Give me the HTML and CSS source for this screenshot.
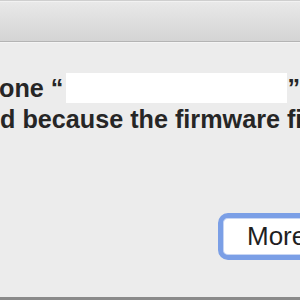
FILE: index.html
```html
<!DOCTYPE html>
<html>
<head>
<meta charset="utf-8">
<link rel="stylesheet" href="styles.css">
</head>
<body>
<div class="window">
  <div class="titlebar"></div>
  <div class="content">
    <div class="message">
      <div class="line line-one"><span>one “</span><span class="redact"></span><span class="quote">”</span></div>
      <div class="line">d because the firmware fi</div>
    </div>
    <div class="actions">
      <button class="btn">More</button>
    </div>
  </div>
  <div class="edge"></div>
</div>
</body>
</html>
```
FILE: styles.css
```css
* { box-sizing: border-box; }
html, body { margin: 0; padding: 0; }
body { width: 300px; height: 300px; overflow: hidden; background: #ececec; }
.window {
  width: 300px; height: 300px; overflow: hidden;
  display: flex; flex-direction: column;
  background: #ececec;
  font-family: "Liberation Sans", Arial, sans-serif;
}
.titlebar {
  height: 42px; flex: none;
  border-top: 1px solid #cfcfcf;
  border-bottom: 1px solid #b4b4b4;
  background: linear-gradient(#e9e9e9, #d4d4d4);
  box-shadow: inset 0 1px 0 #f2f2f2;
}
.content {
  flex: 1;
  display: flex; flex-direction: column;
  border-top: 1px solid #f4f4f4;
}
.message {
  padding-top: 30px;
  font-weight: bold;
  font-size: 25.2px;
  line-height: 31px;
  color: #262626;
  white-space: nowrap;
}
.line { display: flex; align-items: center; height: 31px; }
.line-one span:first-child { margin-left: -1px; }
.redact {
  display: inline-block;
  width: 226px; height: 30px;
  background: #ffffff;
  margin-left: 3px;
  margin-top: -2px;
}
.actions {
  display: flex; justify-content: flex-end;
  margin-top: 78px;
}
.btn {
  width: 110px; height: 47px;
  margin-right: -28px;
  border: 5px solid #7b9fe6;
  border-radius: 10px;
  background: #ffffff;
  box-shadow: inset 0 0 0 1px #c8d6f4;
  font-family: "Liberation Sans", Arial, sans-serif;
  font-size: 26px;
  color: #1f1f1f;
  text-align: left;
  padding: 0 0 0 24px;
  white-space: nowrap;
}
.edge {
  height: 3px; flex: none;
  background: #8a8a8a;
}
```
